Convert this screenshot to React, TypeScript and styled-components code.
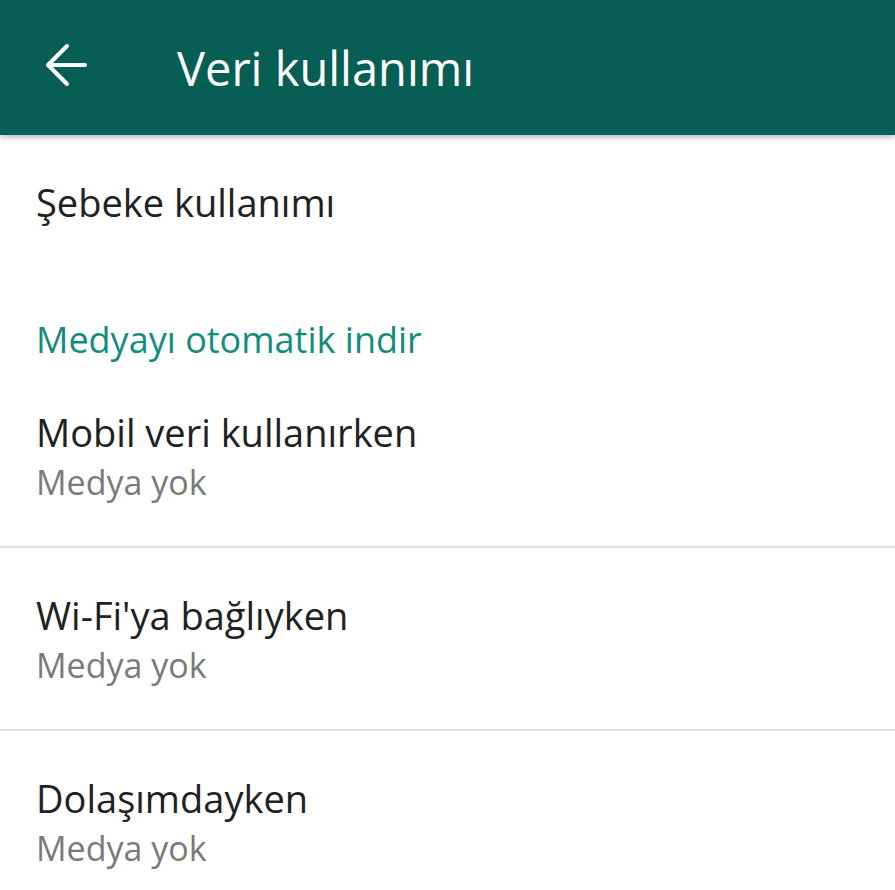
import React from 'react';
import styled, { createGlobalStyle } from 'styled-components';

const GlobalStyle = createGlobalStyle`
  html, body {
    margin: 0;
    padding: 0;
    background: #ffffff;
  }
  body {
    font-family: 'Open Sans', 'Noto Sans', sans-serif;
    -webkit-font-smoothing: antialiased;
  }
`;

const Screen = styled.div`
  width: 895px;
  height: 890px;
  overflow: hidden;
  background: #ffffff;
`;

const Toolbar = styled.header`
  position: relative;
  z-index: 1;
  height: 135px;
  display: flex;
  align-items: center;
  padding-left: 43px;
  background: #075e54;
  box-shadow: 0 2px 6px rgba(0, 0, 0, 0.3);
`;

const BackButton = styled.button`
  display: flex;
  align-items: center;
  justify-content: center;
  width: 44px;
  height: 44px;
  margin-bottom: 5px;
  padding: 0;
  border: none;
  background: transparent;
  color: #ffffff;
`;

const Title = styled.h1`
  margin: 0 0 0 90px;
  font-size: 47px;
  font-weight: 400;
  color: #ffffff;
`;

const List = styled.div`
  display: flex;
  flex-direction: column;
`;

const PlainItem = styled.div`
  height: 140px;
  padding: 41px 36px 0;
  box-sizing: border-box;
  font-size: 38px;
  color: #212121;
`;

const SectionHeader = styled.div`
  height: 90px;
  padding: 40px 36px 0;
  box-sizing: border-box;
  font-size: 36px;
  color: #128c7e;
`;

const Item = styled.div<{ $divider?: boolean }>`
  height: 183px;
  box-sizing: border-box;
  padding: 42px 36px 0;
  display: flex;
  flex-direction: column;
  border-bottom: ${(p) => (p.$divider ? '2px solid #e2e2e2' : 'none')};
`;

const ItemTitle = styled.div`
  font-size: 38px;
  line-height: 50px;
  color: #212121;
`;

const ItemSummary = styled.div`
  margin-top: 2px;
  font-size: 34px;
  line-height: 46px;
  color: #7a7a7a;
`;

const BackArrow = () => (
  <svg width="44" height="44" viewBox="0 0 44 44" fill="none">
    <path
      d="M42 22H5M24 3L5 22l19 19"
      stroke="currentColor"
      strokeWidth="4"
      strokeLinecap="round"
      strokeLinejoin="round"
    />
  </svg>
);

const items = [
  { title: 'Mobil veri kullanırken', summary: 'Medya yok' },
  { title: "Wi-Fi'ya bağlıyken", summary: 'Medya yok' },
  { title: 'Dolaşımdayken', summary: 'Medya yok' },
];

const App: React.FunctionComponent = () => (
  <Screen>
    <GlobalStyle />
    <Toolbar>
      <BackButton aria-label="Geri">
        <BackArrow />
      </BackButton>
      <Title>Veri kullanımı</Title>
    </Toolbar>
    <List>
      <PlainItem>Şebeke kullanımı</PlainItem>
      <SectionHeader>Medyayı otomatik indir</SectionHeader>
      {items.map((item, i) => (
        <Item key={item.title} $divider={i < items.length - 1}>
          <ItemTitle>{item.title}</ItemTitle>
          <ItemSummary>{item.summary}</ItemSummary>
        </Item>
      ))}
    </List>
  </Screen>
);

export default App;
